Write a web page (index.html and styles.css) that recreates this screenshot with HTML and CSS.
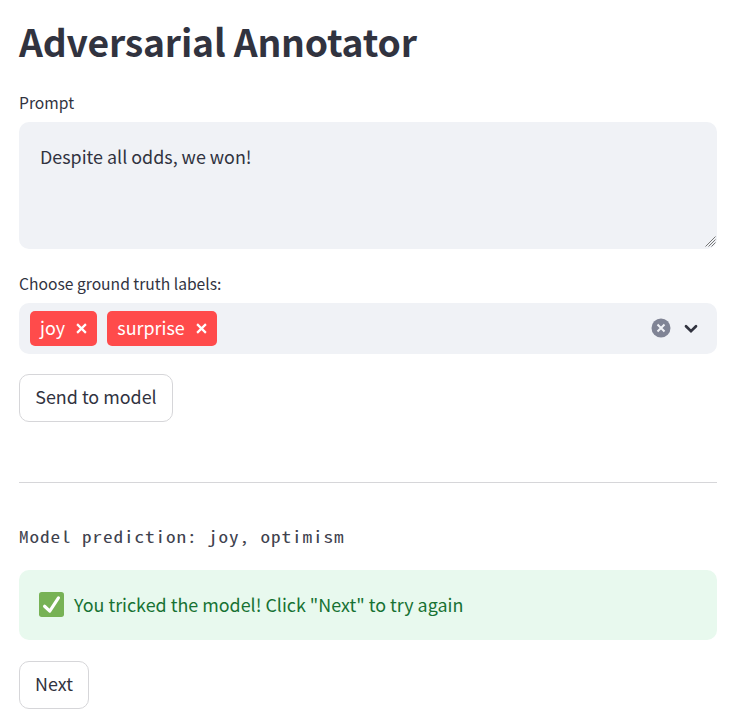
FILE: index.html
```html
<!DOCTYPE html>
<html lang="en">
<head>
<meta charset="utf-8">
<title>Adversarial Annotator</title>
<link rel="stylesheet" href="styles.css">
</head>
<body>
<main class="app">
  <h1 class="title">Adversarial Annotator</h1>
  <label class="label prompt-label" for="prompt">Prompt</label>
  <div class="prompt-box">
    <textarea class="prompt" id="prompt" spellcheck="false">Despite all odds, we won!</textarea>
    <svg class="grip" viewBox="0 0 11 11"><path d="M.5 10.5L10.5 .5M3.5 10.5L10.5 3.5M6.5 10.5L10.5 6.5"/></svg>
  </div>
  <div class="label truth-label">Choose ground truth labels:</div>
  <div class="select">
    <span class="tag"><span>joy</span><svg class="remove" viewBox="0 0 10 10"><path d="M1 1L9 9M9 1L1 9"/></svg></span>
    <span class="tag"><span>surprise</span><svg class="remove" viewBox="0 0 10 10"><path d="M1 1L9 9M9 1L1 9"/></svg></span>
    <svg class="clear" viewBox="0 0 20 20"><circle cx="10" cy="10" r="9.5"/><path d="M6.5 6.5L13.5 13.5M13.5 6.5L6.5 13.5"/></svg>
    <svg class="chevron" viewBox="0 0 14 10"><path d="M2 2.3L7 7.2L12 2.3"/></svg>
  </div>
  <button class="button send">Send to model</button>
  <hr class="divider">
  <div class="prediction">Model prediction: joy, optimism</div>
  <div class="alert">
    <svg class="check" viewBox="0 0 36 36"><rect width="36" height="36" rx="4"/><path d="M8 20.5L15.5 27.5L28 8.5"/></svg>
    <span>You tricked the model! Click "Next" to try again</span>
  </div>
  <button class="button next">Next</button>
</main>
</body>
</html>
```
FILE: styles.css
```css
* { box-sizing: border-box; }
body {
  margin: 0;
  background: #fff;
  color: #31333f;
  font-family: "Noto Sans CJK SC", sans-serif;
  font-size: 17.9px;
  overflow: hidden;
}
.app {
  display: flex;
  flex-direction: column;
  align-items: stretch;
  padding: 14px 15px 0 19px;
}
.title {
  margin: 0;
  height: 54px;
  font-size: 37.3px;
  line-height: 54px;
  font-weight: 700;
  letter-spacing: -0.2px;
  white-space: nowrap;
}
.label { font-size: 15.65px; line-height: 26px; height: 26px; }
.prompt-label { margin-top: 22px; }
.prompt-box { position: relative; height: 127px; margin-top: 6px; }
.prompt {
  display: block;
  width: 100%;
  height: 127px;
  margin: 0;
  padding: 20px 21px;
  border: 0;
  border-radius: 10px;
  background: #f0f2f6;
  color: inherit;
  font: inherit;
  line-height: 28px;
  resize: none;
  outline: 0;
}
.grip { position: absolute; right: 1px; bottom: 2px; width: 11px; height: 11px; }
.grip path { fill: none; stroke: #777; stroke-width: 1; }
.truth-label { margin-top: 22px; }
.select {
  display: flex;
  align-items: center;
  height: 51px;
  margin-top: 6px;
  padding: 0 19px 0 11px;
  border-radius: 10px;
  background: #f0f2f6;
}
.tag {
  display: flex;
  align-items: center;
  justify-content: space-between;
  height: 35px;
  margin-right: 10px;
  padding: 0 10px 2px;
  border-radius: 5px;
  background: #ff4b4b;
  color: #fff;
  line-height: 33px;
}
.remove { width: 11px; height: 11px; margin: 1px 0 0 11.3px; }
.remove path { fill: none; stroke: #fff; stroke-width: 2; }
.clear { width: 20px; height: 20px; margin: 0 0 1px auto; }
.clear circle { fill: #808495; }
.clear path { fill: none; stroke: #f0f2f6; stroke-width: 2; }
.chevron { width: 14px; height: 10px; margin-left: 13px; }
.chevron path { fill: none; stroke: #31333f; stroke-width: 2.7; stroke-linecap: round; }
.button {
  align-self: flex-start;
  height: 48px;
  padding: 0 15px 4px;
  border: 1px solid #d6d6d9;
  border-radius: 10px;
  background: #fff;
  color: inherit;
  font: inherit;
  line-height: 28px;
  white-space: nowrap;
}
.send { width: 154px; margin-top: 20px; }
.divider { width: 100%; height: 1px; margin: 60px 0 0; border: 0; background: #d6d6d9; }
.prediction {
  align-self: flex-start;
  height: 28px;
  margin-top: 39px;
  color: #40424e;
  font-family: "Noto Sans Mono CJK SC", "Liberation Mono", monospace;
  font-size: 16px;
  line-height: 28px;
  letter-spacing: 0.75px;
  white-space: pre;
  transform: scaleX(1.2);
  transform-origin: left center;
}
.alert {
  display: flex;
  align-items: center;
  height: 70px;
  margin-top: 20px;
  padding: 0 20px 2px;
  border-radius: 10px;
  background: #e8f9ee;
  color: #177233;
  white-space: nowrap;
}
.check { width: 25px; height: 25px; margin-right: 10px; }
.check rect { fill: #77b255; }
.check path { fill: none; stroke: #fff; stroke-width: 4.5; stroke-linecap: round; stroke-linejoin: round; }
.next { width: 70px; margin-top: 21px; }
```
